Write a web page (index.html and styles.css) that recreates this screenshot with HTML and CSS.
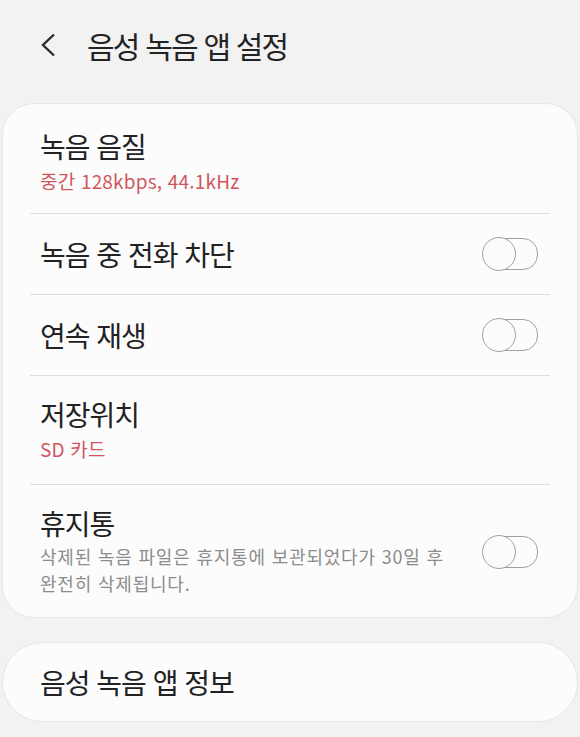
FILE: index.html
```html
<!DOCTYPE html>
<html lang="ko">

<head>
    <meta charset="UTF-8">
    <meta name="viewport" content="width=device-width, initial-scale=1.0">
    <title>음성 녹음 앱 설정</title>
    <link rel="stylesheet" href="styles.css">
</head>

<body>

    <!-- 상단 제목 -->
    <div class="header">
        <svg class="back" width="16" height="24" viewBox="0 0 16 24">
            <path d="M14 1.5 L3 12 L14 22.5" fill="none" stroke="#2b2b2b" stroke-width="2.4" />
        </svg>
        <h1 class="title">음성 녹음 앱 설정</h1>
    </div>

    <!-- 설정 목록 -->
    <div class="card">
        <div class="row row-first">
            <div class="text">
                <div class="label">녹음 음질</div>
                <div class="value">중간 128kbps, 44.1kHz</div>
            </div>
        </div>
        <div class="divider"></div>
        <div class="row">
            <div class="text">
                <div class="label">녹음 중 전화 차단</div>
            </div>
            <span class="switch"></span>
        </div>
        <div class="divider"></div>
        <div class="row">
            <div class="text">
                <div class="label">연속 재생</div>
            </div>
            <span class="switch"></span>
        </div>
        <div class="divider"></div>
        <div class="row row-sub">
            <div class="text">
                <div class="label">저장위치</div>
                <div class="value">SD 카드</div>
            </div>
        </div>
        <div class="divider"></div>
        <div class="row row-last">
            <div class="text">
                <div class="label">휴지통</div>
                <div class="desc">삭제된 녹음 파일은 휴지통에 보관되었다가 30일 후 완전히 삭제됩니다.</div>
            </div>
            <span class="switch"></span>
        </div>
    </div>

    <div class="card card-info">
        <div class="row">
            <div class="text">
                <div class="label">음성 녹음 앱 정보</div>
            </div>
        </div>
    </div>

</body>

</html>
```

FILE: styles.css
```css
* {
    margin: 0;
    padding: 0;
    box-sizing: border-box;
}

body {
    background: #f2f2f2;
    font-family: "Noto Sans CJK KR", "Noto Sans", sans-serif;
    color: #222;
    word-break: keep-all;
}

.header {
    height: 91px;
    display: flex;
    align-items: center;
    padding-left: 40px;
    padding-bottom: 2px;
}

.back {
    display: block;
}

.title {
    margin-left: 31px;
    font-size: 30px;
    font-weight: 400;
    letter-spacing: -1.8px;
    color: #232323;
}

.card {
    margin: 12px 2px 0;
    background: #fcfcfc;
    border: 1px solid #e6e6e6;
    border-radius: 32px;
}

.row {
    display: flex;
    align-items: center;
    justify-content: space-between;
    gap: 30px;
    padding: 23px 39px 23px 37px;
}

.row-first {
    padding-top: 25px;
    padding-bottom: 19px;
}

.row-sub {
    padding-top: 21px;
    padding-bottom: 22px;
}

.row-last {
    padding-top: 21px;
    padding-bottom: 20px;
}

.label {
    font-size: 28px;
    line-height: 34px;
    letter-spacing: -1px;
}

.value {
    margin-top: 5px;
    font-size: 19px;
    line-height: 26px;
    letter-spacing: 0.2px;
    color: #d0565c;
}

.desc {
    margin-top: 3px;
    font-size: 18px;
    line-height: 27px;
    letter-spacing: 0.8px;
    color: #8c8c8c;
}

.divider {
    height: 1px;
    margin: 0 27px;
    background: #dedede;
}

/* 꺼진 상태의 토글 */
.switch {
    flex-shrink: 0;
    width: 56px;
    height: 32px;
    position: relative;
    margin-top: -2px;
}

.switch::before {
    content: "";
    position: absolute;
    left: 2px;
    right: 0;
    top: 1px;
    height: 30px;
    border: 1.5px solid #a0a0a0;
    border-radius: 15px;
}

.switch::after {
    content: "";
    position: absolute;
    left: 0;
    top: 0;
    width: 32px;
    height: 32px;
    background: #fbfbfb;
    border: 1.5px solid #a0a0a0;
    border-radius: 50%;
}

.card-info {
    margin-top: 24px;
    border-radius: 40px;
}

.card-info .row {
    height: 78px;
    padding-top: 0;
    padding-bottom: 0;
}
```
